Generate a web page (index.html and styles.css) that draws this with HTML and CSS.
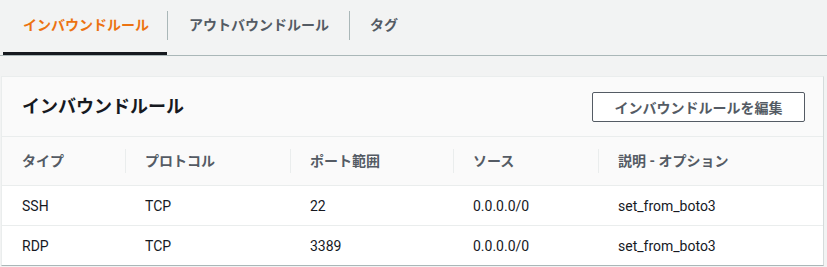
FILE: index.html
```html
<!DOCTYPE html>
<html lang="ja">
<head>
    <meta charset="UTF-8">
    <meta name="viewport" content="width=device-width, initial-scale=1.0">
    <title>セキュリティグループ</title>
    <link rel="stylesheet" href="styles.css">
</head>
<body>
    <!-- タブ -->
    <nav class="tabs">
        <a class="tab active" href="#">インバウンドルール</a>
        <span class="tab-sep"></span>
        <a class="tab" href="#">アウトバウンドルール</a>
        <span class="tab-sep"></span>
        <a class="tab" href="#">タグ</a>
    </nav>

    <!-- ルール一覧 -->
    <section class="card">
        <div class="card-header">
            <h2>インバウンドルール</h2>
            <button type="button">インバウンドルールを編集</button>
        </div>
        <table class="rules">
            <colgroup>
                <col style="width:123px">
                <col style="width:165px">
                <col style="width:163px">
                <col style="width:145px">
                <col>
            </colgroup>
            <thead>
                <tr>
                    <th><div>タイプ</div></th>
                    <th><div>プロトコル</div></th>
                    <th><div>ポート範囲</div></th>
                    <th><div>ソース</div></th>
                    <th><div>説明 - オプション</div></th>
                </tr>
            </thead>
            <tbody>
                <tr>
                    <td>SSH</td>
                    <td>TCP</td>
                    <td>22</td>
                    <td>0.0.0.0/0</td>
                    <td>set_from_boto3</td>
                </tr>
                <tr>
                    <td>RDP</td>
                    <td>TCP</td>
                    <td>3389</td>
                    <td>0.0.0.0/0</td>
                    <td>set_from_boto3</td>
                </tr>
            </tbody>
        </table>
    </section>
</body>
</html>
```

FILE: styles.css
```css
/* 全体 */
body {
    margin: 0;
    font-family: Roboto, "Noto Sans CJK JP", sans-serif;
    font-size: 14px;
    background-color: #f2f3f3;
    color: #16191f;
}

/* タブ */
.tabs {
    display: flex;
    padding-left: 3px;
    border-bottom: 1px solid #aab7b8;
}

.tab {
    padding: 0 20px 2px;
    line-height: 50px;
    border-bottom: 3px solid transparent;
    color: #545b64;
    font-weight: bold;
    text-decoration: none;
}

.tab:first-child {
    padding-right: 18px;
}

.tab-sep + .tab {
    padding-left: 21px;
}

.tab:last-child {
    padding-left: 20px;
}

.tab.active {
    color: #ec7211;
    border-bottom-color: #16191f;
}

.tab-sep {
    width: 1px;
    height: 29px;
    margin-top: 11px;
    background-color: #aab7b8;
}

/* カード */
.card {
    margin: 20px 3px 0 1px;
    background-color: #fff;
    border: 1px solid #eaeded;
    border-bottom-color: #aab7b8;
    border-right-color: #d5dbdb;
}

.card-header {
    display: flex;
    justify-content: space-between;
    align-items: center;
    height: 59px;
    padding: 0 18px 0 20px;
    background-color: #fafafa;
    border-bottom: 1px solid #eaeded;
}

.card-header h2 {
    margin: 0 0 3px;
    font-size: 18px;
    font-weight: bold;
    color: #16191f;
}

.card-header button {
    width: 213px;
    height: 30px;
    padding: 0;
    background-color: #fff;
    border: 1px solid #545b64;
    border-radius: 2px;
    color: #545b64;
    font-family: inherit;
    font-size: 14px;
    font-weight: bold;
}

/* テーブル */
.rules {
    width: 100%;
    border-collapse: collapse;
    table-layout: fixed;
}

.rules th {
    padding: 12px 0;
    background-color: #fafafa;
    border-bottom: 1px solid #eaeded;
    text-align: left;
    font-weight: bold;
    color: #545b64;
}

.rules th div {
    padding: 2px 19px;
    line-height: 20px;
    border-left: 1px solid #eaeded;
}

.rules th:first-child div {
    padding-left: 20px;
    border-left: none;
}

.rules td {
    height: 39px;
    padding: 0 0 0 20px;
    border-bottom: 1px solid #eaeded;
    color: #16191f;
}

.rules tbody tr:last-child td {
    border-bottom: none;
}
```
